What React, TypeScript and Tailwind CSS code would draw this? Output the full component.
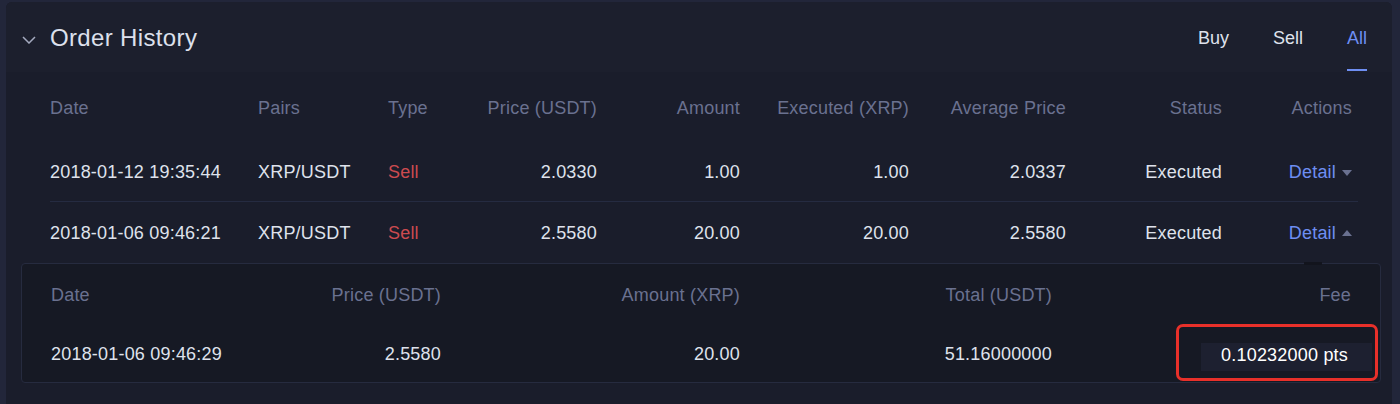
import React from "react";

const mainCols = "grid grid-cols-[208px_130px_72px_137px_143px_169px_157px_156px_130px]";
const subCols = "grid grid-cols-[240px_150px_299px_312px_299px]";

function Caret({ up }: { up?: boolean }) {
  return (
    <svg width="10" height="6" viewBox="0 0 10 6" className="ml-[6px]">
      {up ? <path d="M0 6 L5 0 L10 6 Z" fill="#6a7190" /> : <path d="M0 0 L10 0 L5 6 Z" fill="#6a7190" />}
    </svg>
  );
}

function Row({ date, price, amount, executed, avg, up, border }: { date: string; price: string; amount: string; executed: string; avg: string; up?: boolean; border?: boolean }) {
  return (
    <div className={`${mainCols} h-[60px] items-center pt-[2px] text-[18px] tracking-[0.2px] text-[#dfe2ec] ${border ? "border-b border-[#252b41]" : ""}`}>
      <div>{date}</div>
      <div>XRP/USDT</div>
      <div className="text-[#cc4b50]">Sell</div>
      <div className="text-right">{price}</div>
      <div className="text-right">{amount}</div>
      <div className="text-right">{executed}</div>
      <div className="text-right">{avg}</div>
      <div className="text-right">Executed</div>
      <div className="flex items-center justify-end text-[#6e8ef2]">
        Detail
        <Caret up={up} />
      </div>
    </div>
  );
}

export default function App() {
  return (
    <div className="w-[1400px] h-[404px] overflow-hidden bg-[#22263a] pt-[2px] pl-[6px] pr-[8px]" style={{ fontFamily: '"Liberation Sans", Arial, sans-serif' }}>
      <div className="rounded-t-[6px] overflow-hidden bg-[#1a1d2b] h-[420px]">
        {/* header */}
        <div className="h-[70px] bg-[#1c1f2d] flex items-center pt-[2px] pl-[16px] pr-[25px]">
          <svg width="14" height="8" viewBox="0 0 14 8" className="mt-[4px]">
            <path d="M1 1 L7 7 L13 1" fill="none" stroke="#a4aabf" strokeWidth="1.5" />
          </svg>
          <div className="ml-[14px] text-[24px] tracking-[0.35px] text-[#dde0ec]">Order History</div>
          <div className="ml-auto flex items-stretch h-full text-[18px]">
            <div className="flex items-center text-[#dfe2ec]">Buy</div>
            <div className="flex items-center ml-[44px] text-[#dfe2ec]">Sell</div>
            <div className="relative flex items-center ml-[44px] text-[#6e8ef2]">
              All
              <div className="absolute left-0 right-0 bottom-[1px] h-[2px] bg-[#6e8ef2]" />
            </div>
          </div>
        </div>
        {/* table */}
        <div className="pl-[44px] pr-[34px]">
          <div className={`${mainCols} h-[70px] items-center pt-[2px] text-[18px] tracking-[0.2px] text-[#6a7190]`}>
            <div>Date</div>
            <div>Pairs</div>
            <div>Type</div>
            <div className="text-right">Price (USDT)</div>
            <div className="text-right">Amount</div>
            <div className="text-right">Executed (XRP)</div>
            <div className="text-right">Average Price</div>
            <div className="text-right">Status</div>
            <div className="text-right">Actions</div>
          </div>
          <Row date="2018-01-12 19:35:44" price="2.0330" amount="1.00" executed="1.00" avg="2.0337" border />
          <Row date="2018-01-06 09:46:21" price="2.5580" amount="20.00" executed="20.00" avg="2.5580" up />
        </div>
        {/* detail panel */}
        <div className="relative ml-[15px] mr-[11px] mt-[1px] h-[120px] rounded-[4px] border border-[#262b3f] bg-[#161924] pl-[29px] pr-[29px]">
          <div className="absolute top-[-2px] left-[1282px] w-[18px] h-[3px] bg-[#12141d]" />
          <div className={`${subCols} h-[62px] items-center text-[18px] tracking-[0.2px] text-[#6a7190]`}>
            <div>Date</div>
            <div className="text-right">Price (USDT)</div>
            <div className="text-right">Amount (XRP)</div>
            <div className="text-right">Total (USDT)</div>
            <div className="text-right">Fee</div>
          </div>
          <div className={`${subCols} h-[56px] items-center text-[18px] tracking-[0.2px] text-[#dfe2ec]`}>
            <div>2018-01-06 09:46:29</div>
            <div className="text-right">2.5580</div>
            <div className="text-right">20.00</div>
            <div className="text-right">51.16000000</div>
            <div className="flex justify-end">
              <div className="relative top-[3px] mr-[-21px] h-[28px] w-[171px] bg-[#1d2030] flex items-center justify-end pr-[24px] text-white">
                <span className="relative top-[-2px]">0.10232000 pts</span>
                <div className="absolute left-[-25px] right-[-6px] top-[-19px] bottom-[-10px] rounded-[7px] border-[3px] border-[#e8302a]" />
              </div>
            </div>
          </div>
        </div>
      </div>
    </div>
  );
}
